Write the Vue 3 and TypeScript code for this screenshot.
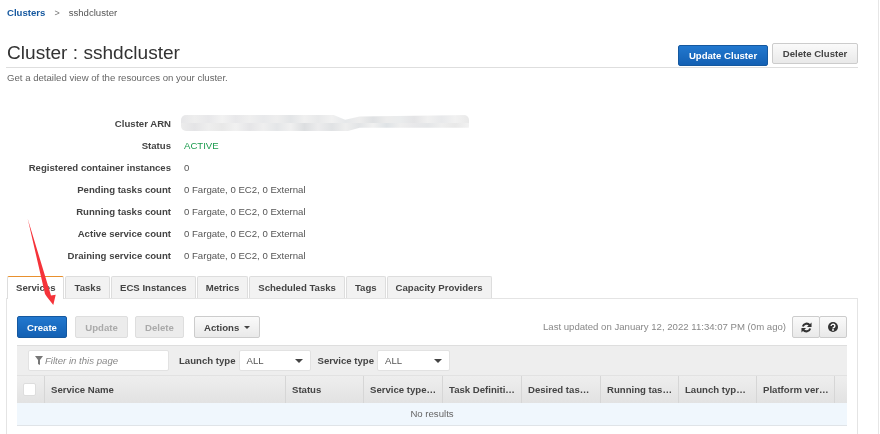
<script setup lang="ts">
const rows: [string, string][] = [
  ['Status', 'ACTIVE'],
  ['Registered container instances', '0'],
  ['Pending tasks count', '0 Fargate, 0 EC2, 0 External'],
  ['Running tasks count', '0 Fargate, 0 EC2, 0 External'],
  ['Active service count', '0 Fargate, 0 EC2, 0 External'],
  ['Draining service count', '0 Fargate, 0 EC2, 0 External'],
]
const tabs = ['Services', 'Tasks', 'ECS Instances', 'Metrics', 'Scheduled Tasks', 'Tags', 'Capacity Providers']
const cols: [string, number][] = [
  ['Service Name', 241],
  ['Status', 78],
  ['Service type…', 79],
  ['Task Definiti…', 79],
  ['Desired tas…', 79],
  ['Running tas…', 78],
  ['Launch typ…', 78],
  ['Platform ver…', 78],
]
const toGradient = (c: string[]) => `linear-gradient(90deg, ${c.join(', ')})`
const blurTop = toGradient(['#e6e6e8', '#eeeeee', '#e8e8ea', '#f2f2f2', '#e8e8ea', '#efefef', '#e8e9eb', '#eeeeee', '#e3e5e7', '#f0f0f0', '#e8e9ea', '#f1f1f1', '#e6e8ea', '#ededed', '#dfe1e3', '#ececec', '#eaeced', '#e4e4e6', '#f0f0f0', '#e8e9eb', '#f1f1f1', '#e9e9e9'])
const blurBottom = toGradient(['#ececec', '#e4e4e6', '#eeeeee', '#e8e8e8', '#f1f1f1', '#e5e5e7', '#efefef', '#e4e6e8', '#f0f0f0', '#dcdee0', '#ececed', '#e0e2e4', '#eeeeee', '#e2e4e6', '#f0f0f0', '#dfe3e6', '#eeeeee', '#e8e8ea', '#e4e6e8', '#eeeeee', '#e8e8e8', '#f2f2f2'])
</script>

<template>
  <div class="page">
    <nav class="crumbs">
      <a class="crumb-link">Clusters</a>
      <span class="crumb-sep">&gt;</span>
      <span>sshdcluster</span>
    </nav>

    <header class="head">
      <h1>Cluster : sshdcluster</h1>
      <div class="head-actions">
        <button class="btn primary lg update-cluster">Update Cluster</button>
        <button class="btn lg delete-cluster">Delete Cluster</button>
      </div>
    </header>
    <p class="sub">Get a detailed view of the resources on your cluster.</p>

    <dl class="details">
      <div class="row">
        <dt>Cluster ARN</dt>
        <dd class="arn">
          <div class="arn-band" :style="{ background: blurTop }"></div>
          <div class="arn-band" :style="{ background: blurBottom }"></div>
        </dd>
      </div>
      <div v-for="r in rows" :key="r[0]" class="row">
        <dt>{{ r[0] }}</dt>
        <dd :class="{ active: r[1] === 'ACTIVE' }">{{ r[1] }}</dd>
      </div>
    </dl>

    <div class="tabs">
      <div v-for="(t, i) in tabs" :key="t" class="tab" :class="{ current: i === 0 }">{{ t }}</div>
    </div>

    <section class="panel">
      <div class="toolbar">
        <button class="btn primary create">Create</button>
        <button class="btn disabled update">Update</button>
        <button class="btn disabled delete">Delete</button>
        <button class="btn actions">Actions <span class="caret"></span></button>
        <span class="updated">Last updated on January 12, 2022 11:34:07 PM (0m ago)</span>
        <div class="group">
          <button class="btn icon">
            <svg width="11" height="11" viewBox="0 0 24 24" fill="none" stroke="#333" stroke-width="4.500">
              <path d="M4 10a8.5 8.5 0 0 1 15-3" />
              <path d="M20 14a8.5 8.5 0 0 1-15 3" />
              <path d="M23 1v10h-10z M1 23v-10h10z" fill="#333" stroke="none" />
            </svg>
          </button>
          <button class="btn icon">
            <svg width="10" height="10" viewBox="0 0 24 24">
              <circle cx="12" cy="12" r="12" fill="#333" />
              <path d="M7.500 9.500a4.500 4 0 1 1 7 3.200c-1.500 1-2.500 1.500-2.500 3" fill="none" stroke="#fff" stroke-width="3.400" />
              <rect x="10" y="17" width="4" height="4" fill="#fff" />
            </svg>
          </button>
        </div>
      </div>

      <div class="filters">
        <div class="filter-input">
          <svg width="8" height="9" viewBox="0 0 8 9"><path d="M0 0h8L5 4v5L3 8V4z" fill="#777" /></svg>
          <em>Filter in this page</em>
        </div>
        <label class="f-label launch">Launch type</label>
        <div class="select launch-select">ALL<span class="caret big"></span></div>
        <label class="f-label service">Service type</label>
        <div class="select service-select">ALL<span class="caret big"></span></div>
      </div>

      <div class="thead">
        <div class="th check"><span class="box"></span></div>
        <div v-for="c in cols" :key="c[0]" class="th" :style="{ width: c[1] + 'px' }">{{ c[0] }}</div>
      </div>
      <div class="empty">No results</div>
    </section>

    <svg class="arrow" width="40" height="95" viewBox="0 0 40 95">
      <path d="M2.700 .7 L20 76 L22 79 L28.300 87 L30.700 76.700 L26 77.500 Z" fill="#f5333a" />
    </svg>
  </div>
</template>

<style>
html, body { margin: 0; background: #fff; overflow: hidden; }
</style>

<style scoped>
.page {
  position: relative;
  width: 879px;
  height: 434px;
  box-sizing: border-box;
  padding: 6px 20px 0 6px;
  overflow: hidden;
  font-family: "Liberation Sans", Arial, sans-serif;
  font-size: 9.6px;
  color: #444;
  background: #fff;
  border-right: 1px solid #e6e6e6;
  filter: blur(0.3px);
}
.crumbs { display: flex; align-items: center; height: 13px; padding-left: 1px; color: #555; }
.crumb-link { color: #15589f; font-weight: 700; }
.crumb-sep { margin: 0 9px; color: #777; font-size: 9px; }

.head {
  display: flex;
  justify-content: space-between;
  align-items: flex-start;
  height: 49px;
  box-sizing: border-box;
  padding-top: 24px;
  border-bottom: 1px solid #dedede;
}
h1 { margin: -2px 0 0; font-size: 19.1px; font-weight: 400; line-height: 24px; color: #333; padding-left: 1px; }
.head-actions { display: flex; gap: 4px; align-items: flex-start; margin-top: 2px; }

.sub { margin: 3px 0 0; line-height: 13px; color: #666; padding-left: 1px; }

.btn {
  box-sizing: border-box;
  padding: 0;
  border: 1px solid #ccc;
  border-radius: 2px;
  background: linear-gradient(#fafafa, #e9e9e9);
  font: 700 9.6px "Liberation Sans", Arial, sans-serif;
  color: #444;
}
.btn.primary {
  border-color: #15589f;
  background: linear-gradient(#2278cf, #1360b3);
  color: #fff;
}
.btn.disabled { background: #ececec; border-color: #dedede; color: #aaa; }
.lg { height: 21px; }
.update-cluster { width: 90px; }
.delete-cluster { width: 86px; margin-top: -2px; }

.details { margin: 28px 0 0; }
.row { display: flex; height: 22px; align-items: center; }
dt { width: 165px; text-align: right; font-weight: 700; color: #444; }
dd { margin: 0 0 0 13px; color: #555; }
dd.active { color: #1d9c4f; }
.arn {
  width: 288px;
  height: 16px;
  margin-left: 10px;
  overflow: hidden;
  border-radius: 5px;
  clip-path: polygon(0 0, 53% 0, 57% 30%, 62% 10%, 100% 0, 100% 80%, 62% 80%, 58% 100%, 0 100%);
}
.arn-band { height: 8px; }

.tabs { display: flex; gap: 1px; margin: 10px 0 0 1px; height: 22px; position: relative; z-index: 1; }
.tab {
  box-sizing: border-box;
  height: 22px;
  padding: 5px 8px 0;
  border: 1px solid #ddd;
  border-bottom: none;
  border-radius: 2px 2px 0 0;
  background: #f2f2f2;
  font-weight: 700;
  color: #444;
}
.tab.current { background: #fff; border-top: 1px solid #e8902e; height: 23px; }

.panel {
  box-sizing: border-box;
  height: 200px;
  padding: 0 10px 0 10px;
  border: 1px solid #e4e4e4;
  background: #fff;
}
.toolbar { display: flex; align-items: flex-start; height: 46px; box-sizing: border-box; padding-top: 17px; }
.create { width: 50px; height: 22px; }
.update { width: 53px; height: 22px; margin-left: 8px; }
.delete { width: 49px; height: 22px; margin-left: 7px; }
.actions { width: 66px; height: 22px; margin-left: 10px; }
.caret {
  display: inline-block;
  vertical-align: 2px;
  margin-left: 2px;
  border: 3px solid transparent;
  border-top-color: #444;
  border-bottom: none;
}
.caret.big { position: absolute; right: 7px; top: 8px; border-width: 4px; border-bottom: none; }
.updated { margin-left: auto; color: #888; line-height: 22px; }
.group { display: flex; margin-left: 6px; }
.icon { width: 28px; height: 22px; display: flex; align-items: center; justify-content: center; }
.icon + .icon { margin-left: -1px; }

.filters {
  display: flex;
  align-items: center;
  height: 30px;
  box-sizing: border-box;
  padding: 0 0 1px 11px;
  background: #eee;
  border-top: 1px solid #dedede;
}
.filter-input, .select {
  box-sizing: border-box;
  height: 21px;
  background: #fff;
  border: 1px solid #e2e2e2;
  border-radius: 2px;
  display: flex;
  align-items: center;
  color: #555;
}
.filter-input { width: 141px; padding-left: 6px; gap: 2px; color: #888; }
.f-label { font-weight: 700; color: #444; }
.launch { margin-left: 10px; }
.service { margin-left: 7px; }
.select { position: relative; padding-left: 7px; margin-left: 3px; }
.launch-select { width: 72px; }
.service-select { width: 73px; }

.thead {
  display: flex;
  height: 28px;
  background: linear-gradient(#eeeeee, #e2e2e2);
  border-top: 1px solid #e2e2e2;
  box-sizing: border-box;
}
.th {
  box-sizing: border-box;
  padding-left: 6px;
  display: flex;
  align-items: center;
  font-weight: 700;
  color: #444;
  border-right: 1px solid #d6d6d6;
  white-space: nowrap;
}
.check { width: 28px; padding-left: 6px; }
.box { width: 11px; height: 11px; background: #fff; border: 1px solid #ddd; border-radius: 2px; }
.empty {
  height: 22px;
  line-height: 22px;
  text-align: center;
  background: #f0f7fd;
  border-bottom: 1px solid #e0e4e8;
  color: #666;
}
.arrow { position: absolute; left: 25px; top: 218px; z-index: 2; }
</style>
